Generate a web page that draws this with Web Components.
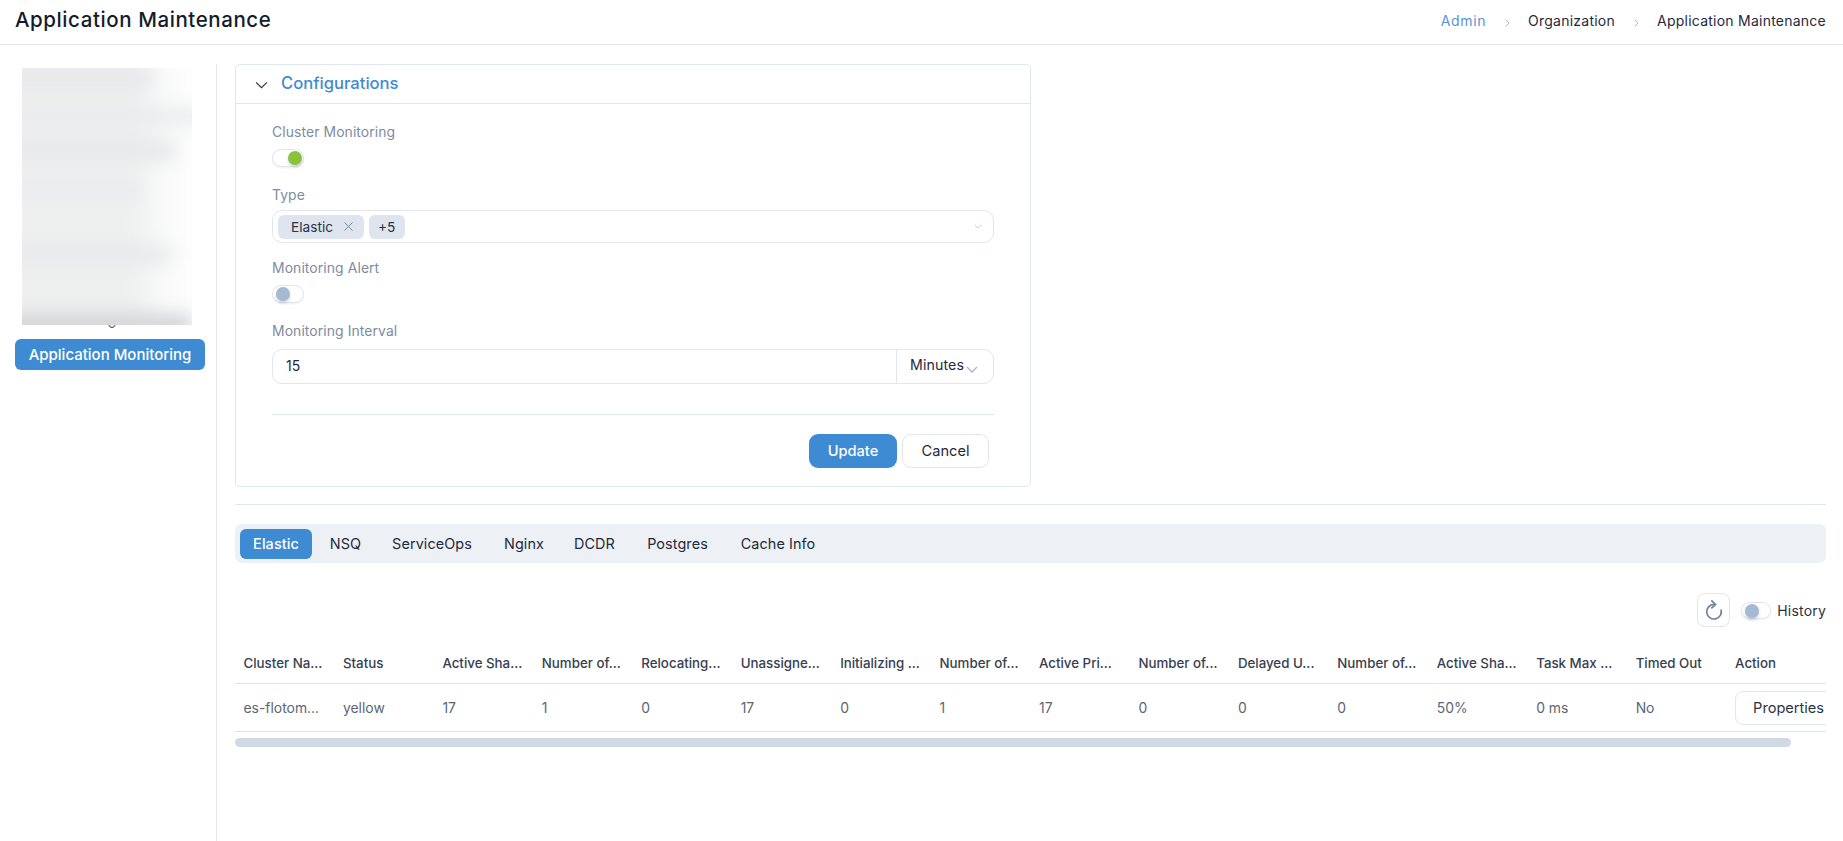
<!DOCTYPE html>
<html><head><meta charset="utf-8"><title>Application Maintenance</title>
<style>
html,body{margin:0;height:100%;background:#fff;overflow:hidden}
body{font-family:Inter,"Noto Sans","Liberation Sans",sans-serif;color:#1f2a3c;font-size:14px}
</style></head><body>
<app-page>
  <app-header title="Application Maintenance" slot="header">
    <bread-crumb link>Admin</bread-crumb><bread-crumb sep>Organization</bread-crumb><bread-crumb sep>Application Maintenance</bread-crumb>
  </app-header>
  <side-nav slot="side"><nav-btn>Application Monitoring</nav-btn></side-nav>
  <config-card heading="Configurations">
    <form-field label="Cluster Monitoring" style="--g:7px;margin-bottom:18px"><toggle-switch on></toggle-switch></form-field>
    <form-field label="Type" style="--g:5px;margin-bottom:15px"><multi-select></multi-select></form-field>
    <form-field label="Monitoring Alert" style="--g:7px;margin-bottom:18px"><toggle-switch></toggle-switch></form-field>
    <form-field label="Monitoring Interval" style="--g:8px"><interval-input></interval-input></form-field>
    <form-actions></form-actions>
  </config-card>
  <section-rule></section-rule>
  <tab-bar></tab-bar>
  <table-tools></table-tools>
  <data-table></data-table>
</app-page>
<script>
const BASE=':host{box-sizing:border-box}*{box-sizing:border-box}';
function def(name,html){
  customElements.define(name,class extends HTMLElement{
    constructor(){super();this.attachShadow({mode:'open'});}
    connectedCallback(){
      if(this._d)return;this._d=1;
      this.shadowRoot.innerHTML=typeof html==='function'?html(this):html;
    }
  });
}
const chev=(w,h,c,sw)=>`<svg width="${w}" height="${h}" viewBox="0 0 12 7" fill="none" stroke="${c}" stroke-width="${sw}"><path d="M1 1l5 5 5-5"/></svg>`;

def('app-page',`<style>${BASE}:host{display:flex;flex-direction:column;height:841px}
.b{flex:1;display:flex;min-height:0}.m{flex:1;min-width:0;padding:19px 17px 0 18px}</style>
<slot name="header"></slot><div class="b"><slot name="side"></slot><div class="m"><slot></slot></div></div>`);

def('app-header',e=>`<style>${BASE}:host{display:flex;align-items:center;justify-content:space-between;height:45px;padding:0 17px 5px 15px;border-bottom:1px solid #e1e6ee}
h1{margin:0;font:500 20.5px/24px Inter,sans-serif;letter-spacing:.58px;color:#141c2b}.c{display:flex;align-items:center;padding-top:3px}</style>
<h1>${e.getAttribute('title')}</h1><div class="c"><slot></slot></div>`);

def('bread-crumb',e=>`<style>${BASE}:host{display:inline-flex;align-items:center;font-size:14px;line-height:18px;letter-spacing:${e.hasAttribute('link')?'.6px':'.24px'};color:${e.hasAttribute('link')?'#5b93d6':'#1f2a3c'}}
svg{margin:3px 18px 0 19px}</style>${e.hasAttribute('sep')?'<svg width="5" height="8" viewBox="0 0 5 8" fill="none" stroke="#aebbcd" stroke-width="1"><path d="M.7.7l3.3 3.3L.7 7.3"/></svg>':''}<slot></slot>`);

def('side-nav',`<style>${BASE}:host{display:block;width:217px;border-right:1px solid #e3e6eb;margin-top:19px;padding:4px 0 0 15px}
.v{width:170px;height:257px;margin-left:7px;overflow:hidden;background:#fff}
.f{filter:blur(9px);margin:-14px -20px 0 -20px;padding-top:14px;height:290px;display:flex;flex-direction:column;background:linear-gradient(90deg,#eef0f0 0,#eef0f0 62%,#fbfbfb 80%,#fff 100%)}
.r{flex:none;background:#e6e8e9}
.a{width:150px;height:22px}.s1{height:18px}.b2{width:225px;height:17px;background:#e9ebec}.s2{height:15px}.c3{width:175px;height:20px}.s3{height:22px}
.d4{width:140px;height:16px;background:#eaebec}.s4{height:48px}.e5{width:170px;height:16px}.s5{height:52px}
.g6{width:190px;height:24px;background:#d2d4d6}
svg{display:block;margin:0 0 11px 93px}</style>
<div class="v"><div class="f"><div class="r a"></div><div class="s1"></div><div class="r b2"></div><div class="s2"></div><div class="r c3"></div><div class="s3"></div><div class="r d4"></div><div class="s4"></div><div class="r e5"></div><div class="s5"></div><div class="r g6"></div></div></div>
<svg width="8" height="3" viewBox="0 0 8 3" fill="none" stroke="#2a3140" stroke-width="1"><path d="M1 0c.4 1.6 1.5 2.4 3 2.4S6.600 1.600 7 0"/></svg>
<slot></slot>`);

def('nav-btn',`<style>${BASE}:host{display:flex;align-items:center;justify-content:center;width:190px;height:31px;background:#3e8bd3;color:#fff;border-radius:6px;font-weight:500;font-size:15px;white-space:nowrap}</style><slot></slot>`);

def('config-card',e=>`<style>${BASE}:host{display:block;width:796px;height:423px;border:1px solid #e1e6ee;border-radius:5px;margin-bottom:17px}
.h{display:flex;align-items:center;height:39px;border-bottom:1px solid #e1e6ee;padding:0 0 3px 19px;color:#3e8bd3;font-weight:500;font-size:16.6px}
svg{margin:5px 13px 0 0}.t{padding:18px 36px 0}</style>
<div class="h">${chev(13,8,'#2b3444',1.05)}<span>${e.getAttribute('heading')}</span></div><div class="t"><slot></slot></div>`);

def('form-field',e=>`<style>${BASE}:host{display:block}.l{line-height:20px;font-size:13.9px;letter-spacing:.1px;color:#7e8c9f;margin-bottom:var(--g)}</style>
<div class="l">${e.getAttribute('label')}</div><slot></slot>`);

def('toggle-switch',e=>{const on=e.hasAttribute('on');return `<style>${BASE}:host{display:block;width:32px;height:18px;border:1px solid #e1e6ee;border-radius:9px;background:#fff;padding:1px;box-shadow:0 1px 2px rgba(60,70,90,.08)}
i{display:block;width:14px;height:14px;border-radius:50%;background:${on?'#88c43b':'#a6b9d3'};margin-left:${on?'14px':'2px'};box-shadow:0 2px 3px rgba(60,70,90,.22)}</style><i></i>`});

def('tag-chip',`<style>${BASE}:host{display:inline-flex;align-items:center;height:24px;background:#dfe5ee;border-radius:6px;padding:0 0 0 13px;font-size:13.7px;color:#2a3444;gap:11px}</style><slot></slot>`);

def('multi-select',`<style>${BASE}:host{display:flex;align-items:center;height:33px;border:1px solid #e1e6ee;border-radius:10px;padding:0 11px 0 5px;gap:5px}
.s{flex:1}.x{display:block;flex:none}</style>
<tag-chip style="width:86px">Elastic<svg class="x" width="9" height="9" viewBox="0 0 9 9" fill="none" stroke="#7e8b9e" stroke-width="1"><path d="M.5.5l8 8M8.500.5l-8 8"/></svg></tag-chip><tag-chip style="width:36px;padding:0 0 0 9px">+5</tag-chip><span class="s"></span>${chev(8,5,'#b6c2d4',1.2)}`);

def('interval-input',`<style>${BASE}:host{display:flex;height:35px;border:1px solid #e1e6ee;border-radius:10px;font-size:14px;color:#1f2a3c}
.a{flex:1;padding:0 13px;line-height:32px}.u{width:97px;border-left:1px solid #e1e6ee;display:flex;align-items:center;padding:0 0 0 13px}
.t{margin-top:-4px;font-size:14.2px;letter-spacing:.1px}svg{margin:5px 0 0 2px}</style>
<div class="a">15</div><div class="u"><span class="t">Minutes</span>${chev(12,7,'#a8b7cc',1.3)}</div>`);

def('form-actions',`<style>${BASE}:host{display:flex;justify-content:flex-end;gap:5px;margin-top:30px;padding:19px 5px 0 0;border-top:1px solid #e1e6ee}
b{display:flex;align-items:center;justify-content:center;height:34px;border-radius:9px;font-weight:500;font-size:14.6px}
.p{width:88px;background:#3e8bd3;color:#fff}.q{width:87px;border:1px solid #e1e6ee;color:#1f2a3c;font-weight:400}</style>
<b class="p">Update</b><b class="q">Cancel</b>`);

def('section-rule',`<style>${BASE}:host{display:block;height:1px;background:#e1e6ee;margin-bottom:19px}</style>`);

def('tab-bar',`<style>${BASE}:host{display:flex;align-items:center;height:39px;background:#edf0f5;border-radius:7px;padding:0 5px;font-size:14.4px;letter-spacing:.1px;color:#1f2a3c}
span{display:flex;align-items:center;justify-content:center;height:30px;border-radius:6px}
.on{background:#3e8bd3;color:#fff;font-weight:500;width:72px;margin-right:2px}</style>
<span class="on">Elastic</span><span style="width:63px">NSQ</span><span style="width:110px">ServiceOps</span><span style="width:74px">Nginx</span><span style="width:67px">DCDR</span><span style="width:99px">Postgres</span><span style="width:102px">Cache Info</span>`);

def('table-tools',`<style>${BASE}:host{display:flex;align-items:center;justify-content:flex-end;margin-top:30px;height:34px;font-size:14px;color:#2a3444}
.r{display:flex;align-items:center;justify-content:center;width:33px;height:34px;border:1px solid #e1e6ee;border-radius:8px;margin-right:11px}
toggle-switch{width:30px;height:17px;margin-right:6px;display:block}span{letter-spacing:.2px}</style>
<div class="r"><svg width="20" height="22" viewBox="0 0 20 22" fill="none" stroke="#6f8299" stroke-width="1.7"><path d="M17 10.500A7.300 7.300 0 1 1 10 5.400"/><path d="M7.300 1.300L11.500 5.400 7.300 9.300"/></svg></div>
<toggle-switch></toggle-switch><span>History</span>`);

const H=['Cluster Na...','Status','Active Sha...','Number of...','Relocating...','Unassigne...','Initializing ...','Number of...','Active Pri...','Number of...','Delayed U...','Number of...','Active Sha...','Task Max ...','Timed Out','Action'];
const R=['es-flotom...','yellow','17','1','0','17','0','1','17','0','0','0','50%','0 ms','No'];
def('data-table',`<style>${BASE}:host{display:block;margin-top:16px}
.w{overflow:hidden}.g{display:grid;grid-template-columns:repeat(16,99.45px);width:1591.2px;font-size:13.9px}
.h{height:41px;display:flex;align-items:center;padding:0 0 1px 8.500px;white-space:nowrap;color:#36404f;font-weight:500;border-bottom:1px solid #e1e4ea;font-size:13.3px}
.c{height:48px;display:flex;align-items:center;padding:0 0 0 8.500px;white-space:nowrap;color:#5b6675;border-bottom:1px solid #e1e4ea}
.p{display:flex;align-items:center;height:34px;width:110px;flex:none;border:1px solid #e1e6ee;border-radius:8px;padding-left:17px;color:#2a3444;font-size:14.6px}
.s{height:9px;width:1556px;margin-top:6px;background:#d0dae5;border-radius:5px}</style>
<div class="w"><div class="g">${H.map(x=>`<div class="h">${x}</div>`).join('')}${R.map(x=>`<div class="c">${x}</div>`).join('')}<div class="c"><div class="p">Properties</div></div></div></div><div class="s"></div>`);
</script>
</body></html>
